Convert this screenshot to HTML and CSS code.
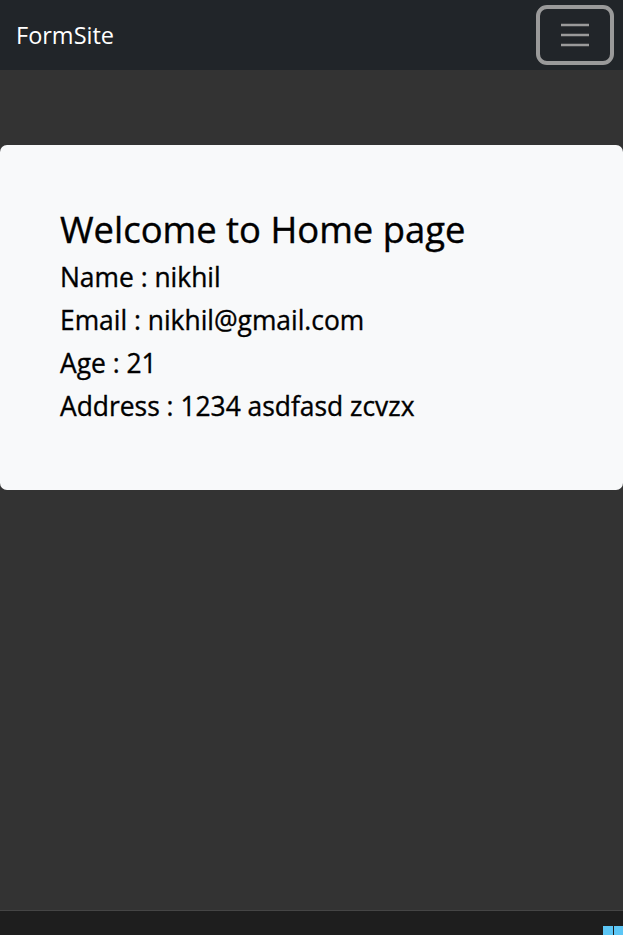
FILE: index.html
```html
<!DOCTYPE html>
<html>
<head>
<meta charset="utf-8">
<link rel="stylesheet" href="styles.css">
</head>
<body>
<div class="screen">
  <nav class="navbar">
    <span class="brand">FormSite</span>
    <button class="toggler" aria-label="menu">
      <svg width="30" height="24" viewBox="0 0 30 24"><path d="M1 2h28M1 12h28M1 22h28" stroke="#9a9a9a" stroke-width="2.5" fill="none"/></svg>
    </button>
  </nav>
  <main class="content">
    <section class="card">
      <h2 class="title">Welcome to Home page</h2>
      <p class="line">Name : nikhil</p>
      <p class="line">Email : nikhil@gmail.com</p>
      <p class="line">Age : 21</p>
      <p class="line">Address : 1234 asdfasd zcvzx</p>
    </section>
  </main>
  <footer class="taskbar">
    <span class="winlogo"></span>
  </footer>
</div>
</body>
</html>
```
FILE: styles.css
```css
html, body { margin: 0; padding: 0; }
body {
  font-family: "Open Sans", "Noto Sans", sans-serif;
  background: #333333;
}
.screen {
  width: 623px;
  height: 935px;
  display: flex;
  flex-direction: column;
  overflow: hidden;
}
.navbar {
  height: 70px;
  background: #212529;
  display: flex;
  align-items: center;
  justify-content: space-between;
  padding: 0 9px 0 16px;
  box-sizing: border-box;
  flex: none;
}
.brand {
  color: #ffffff;
  font-size: 23.5px;
}
.toggler {
  width: 78px;
  height: 60px;
  margin-top: -1px;
  border: 4px solid #9a9a9a;
  border-radius: 11px;
  background: transparent;
  display: flex;
  align-items: center;
  justify-content: center;
  padding: 0;
  box-sizing: border-box;
}
.content {
  flex: 1;
  padding-top: 75px;
  background: #333333;
}
.card {
  background: #f8f9fa;
  border-radius: 7px;
  height: 345px;
  box-sizing: border-box;
  padding: 63px 60px 0;
}
.title {
  margin: 0 0 4px;
  font-size: 36.4px;
  font-weight: 400;
  line-height: 1.2;
  color: #000;
  -webkit-text-stroke: 0.4px #000;
}
.line {
  margin: 0;
  font-size: 26.4px;
  font-weight: 400;
  line-height: 43px;
  color: #000;
  -webkit-text-stroke: 0.35px #000;
}
.taskbar {
  height: 25px;
  flex: none;
  background: #1e1e1e;
  border-top: 1px solid #454545;
  box-sizing: border-box;
  display: flex;
  justify-content: flex-end;
  align-items: flex-end;
}
.winlogo {
  width: 20px;
  height: 9px;
  background: linear-gradient(to right, #5cc6f5 0 10px, #1e1e1e 10px 11px, #5cc6f5 11px);
}
```
